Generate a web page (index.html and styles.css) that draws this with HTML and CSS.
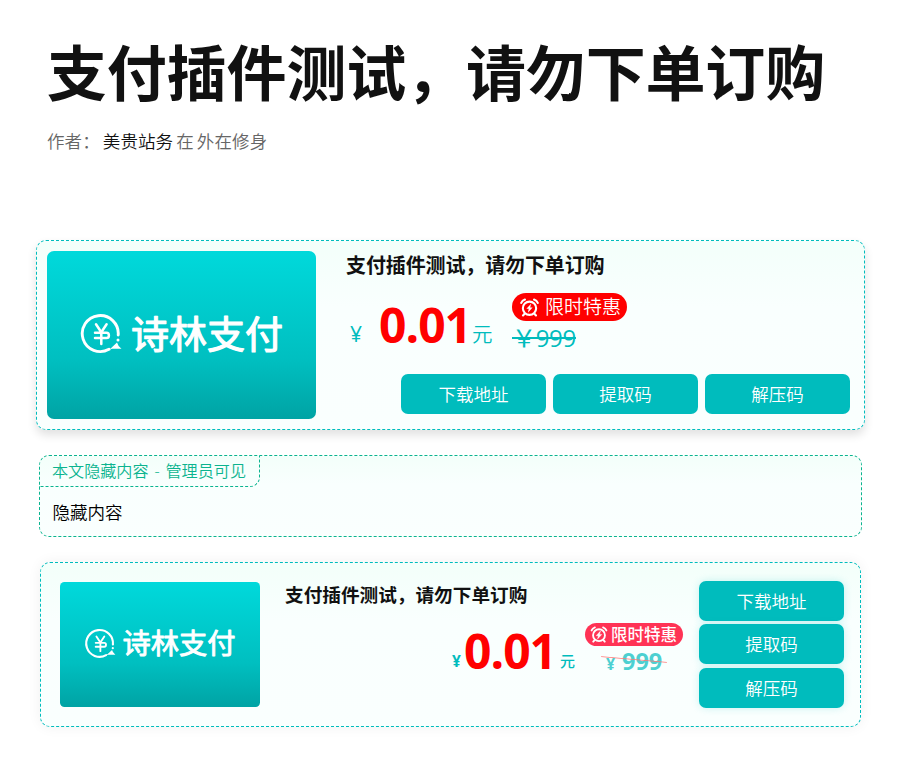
FILE: index.html
```html
<!DOCTYPE html>
<html lang="zh-CN">
<head>
<meta charset="utf-8">
<title>支付插件测试，请勿下单订购</title>
<link rel="stylesheet" href="styles.css">
</head>
<body>
<svg class="defs" aria-hidden="true">
  <defs>
    <linearGradient id="cover-bg" x1="0" y1="0" x2="0" y2="1">
      <stop offset="0" stop-color="#00d9db"/>
      <stop offset=".65" stop-color="#00bfc0"/>
      <stop offset="1" stop-color="#00a3a4"/>
    </linearGradient>
    <symbol id="alarm" viewBox="0 0 20 20">
      <g fill="none" stroke="currentColor" stroke-width="2.2" stroke-linecap="round" stroke-linejoin="round">
        <circle cx="10" cy="10.800" r="7"/>
        <path d="M1.300 5.200Q2.400 2.600 5.200 1.600M18.700 5.200Q17.600 2.600 14.800 1.600M4.600 16.800l-1.400 1.600M15.400 16.800l1.400 1.600"/>
      </g>
      <path d="M11.700 6L6.700 11.400h2.500l-.9 4 5-5.500h-2.600z" fill="currentColor"/>
    </symbol>
    <symbol id="coin" viewBox="0 0 50 50">
      <g fill="none" stroke="#fff" stroke-linecap="round" stroke-linejoin="round">
        <path d="M39.200 25A18 18 0 1 0 30 39.300" stroke-width="2.900"/>
        <path d="M17 14.300l5.300 8 5.300-8M16 22.800h11.500q2.400 0 2.400 2.600t-2.400 2.600H16M16 22.800v0M22.300 22.500v11.500M16 28v0" stroke-width="2.500"/>
      </g>
      <path d="M28.500 40.200q3-1 5.500-4l4-3.700q.6 3 4.500 6.200H33z" fill="#fff"/>
      <circle cx="39" cy="30" r="1.500" fill="#fff"/>
    </symbol>
  </defs>
</svg>
<main class="page">
  <header class="head">
    <h1>支付插件测试，请勿下单订购</h1>
    <p class="meta"><span>作者：</span><b>美贵站务</b><span>在</span><span>外在修身</span></p>
  </header>

  <section class="card card-wide">
    <svg class="cover" viewBox="0 0 269 168">
      <rect width="269" height="168" rx="7" fill="url(#cover-bg)"/>
      <use href="#coin" x="32" y="59" width="50" height="50"/>
      <text class="brand" x="84" y="96.500" textLength="152">诗林支付</text>
    </svg>
    <div class="info">
      <h2>支付插件测试，请勿下单订购</h2>
      <div class="price-row">
        <p class="price"><span class="yen">¥</span><strong>0.01</strong><span class="unit">元</span></p>
        <div class="offer">
          <span class="tag"><svg><use href="#alarm"/></svg>限时特惠</span>
          <s class="old">￥999</s>
        </div>
      </div>
      <div class="actions"><a class="btn">下载地址</a><a class="btn">提取码</a><a class="btn">解压码</a></div>
    </div>
  </section>

  <section class="hidden-box">
    <span class="label">本文隐藏内容 - 管理员可见</span>
    <p>隐藏内容</p>
  </section>

  <section class="card card-compact">
    <svg class="cover" viewBox="0 0 269 168">
      <rect width="269" height="168" rx="6" fill="url(#cover-bg)"/>
      <use href="#coin" x="32" y="59" width="50" height="50"/>
      <text class="brand" x="84" y="96.500" textLength="152">诗林支付</text>
    </svg>
    <div class="info">
      <h2>支付插件测试，请勿下单订购</h2>
      <div class="price-row">
        <p class="price"><span class="yen">¥</span><strong>0.01</strong><span class="unit">元</span></p>
        <div class="offer">
          <span class="tag"><svg><use href="#alarm"/></svg>限时特惠</span>
          <span class="old"><small>¥</small>999</span>
        </div>
      </div>
    </div>
    <div class="actions"><a class="btn">下载地址</a><a class="btn">提取码</a><a class="btn">解压码</a></div>
  </section>
</main>
</body>
</html>
```

FILE: styles.css
```css
* { box-sizing: border-box; }
body {
  margin: 0;
  background: #fff;
  color: #111;
  font: 350 17.5px/26px "Open Sans", "Noto Sans CJK SC", sans-serif;
}
h1, h2, p { margin: 0; }
.defs { display: block; width: 0; height: 0; }
.page { width: 899px; height: 764px; overflow: hidden; padding: 33px 34px 0 36px; }
.head { height: 207px; padding-left: 11px; }
h1 { font-size: 60px; line-height: 80px; font-weight: 700; letter-spacing: -.15px; white-space: nowrap; }
.meta { display: flex; margin-top: 15px; color: #666; letter-spacing: .1px; }
.meta b { font-weight: 350; color: #111; margin: 0 3px; }
.meta span + span { margin-left: 3px; }
.meta b + span { margin-left: 0; }

.card {
  display: flex;
  border: 1px dashed #00bcbd;
  border-radius: 10px;
  background: linear-gradient(#f3fffa, #f9fffe 35%, #fafffe);
}
.cover { display: block; flex: none; }
.brand {
  font: 400 38px "Noto Sans CJK SC", sans-serif;
  fill: #fff;
  stroke: #fff;
  stroke-width: 1.2px;
  stroke-linejoin: round;
}
h2 { font-weight: 700; white-space: nowrap; }
.price-row, .price, .tag { display: flex; }
.price { color: #00bcbd; }
.price strong { color: #f00; font-size: 48px; line-height: 60px; font-weight: 700; letter-spacing: -1px; }
.tag { align-items: center; color: #fff; white-space: nowrap; }
.btn {
  display: block;
  width: 145px;
  height: 40px;
  border-radius: 7px;
  background: #00bcbd;
  color: #fff;
  line-height: 40px;
  text-align: center;
}

.card-wide { width: 829px; height: 190px; padding: 10px; box-shadow: 0 5px 10px rgba(0, 0, 0, .12); }
.card-wide .cover { width: 269px; height: 168px; }
.card-wide .info { margin-left: 30px; flex: 1; }
.card-wide h2 { font-size: 20px; line-height: 30px; letter-spacing: -.12px; }
.card-wide .price-row { height: 81px; margin-top: 12px; }
.card-wide .price { width: 166px; padding-left: 4px; }
.card-wide .yen { width: 29px; font-size: 21px; line-height: 82px; font-weight: 400; }
.card-wide .price strong { line-height: 63px; }
.card-wide .unit { font-size: 20.5px; line-height: 82px; margin-left: 1px; }
.card-wide .tag { width: 115px; height: 28px; border-radius: 14px; background: #f00; font-size: 19px; padding-left: 8px; }
.card-wide .tag svg { width: 19px; height: 19px; margin-right: 6px; }
.card-wide .old { display: block; width: max-content; margin-top: 2px; color: #00bcbd; font-size: 24px; font-weight: 400; line-height: 30px; letter-spacing: -.3px; text-decoration-thickness: 2px; }
.card-wide .actions { display: flex; gap: 7px; margin-left: 55px; }

.hidden-box {
  width: 823px;
  height: 82px;
  margin: 25px 0 0 3px;
  border: 1px dashed #0bb48f;
  border-radius: 10px;
  background: linear-gradient(#f3fffa, #f9fffe 35%, #fafffe);
}
.label {
  display: block;
  width: 221px;
  height: 31px;
  margin-left: -1px;
  padding-left: 13px;
  border: 1px dashed #0bb48f;
  border-width: 0 1px 1px 0;
  border-bottom-right-radius: 10px;
  color: #0bb48f;
  font-size: 16.1px;
  line-height: 31px;
  word-spacing: 1.7px;
  white-space: nowrap;
}
.hidden-box p { margin: 12px 0 0 12.5px; color: #000; }

.card-compact { width: 821px; height: 165px; margin: 25px 0 0 4px; padding: 18px 16px 0 19px; box-shadow: 0 0 14px rgba(0, 0, 0, .06); }
.card-compact .cover { width: 200px; height: 125px; margin-top: 1px; }
.card-compact .info { width: 414px; margin: 0 0 0 25px; flex: none; }
.card-compact h2 { font-size: 18.65px; line-height: 28px; }
.card-compact .price-row { height: 60px; margin-top: 14px; padding-left: 167px; }
.card-compact .price { width: 133px; }
.card-compact .yen { width: 12px; font-size: 15.5px; line-height: 77px; font-weight: 700; }
.card-compact .price strong { line-height: 55px; }
.card-compact .unit { font-size: 15px; line-height: 76px; font-weight: 500; margin-left: 4px; }
.card-compact .tag { width: 98px; height: 23px; border-radius: 12px; background: #f35; font-size: 16.5px; font-weight: 500; padding-left: 5px; }
.card-compact .tag svg { width: 18px; height: 17px; margin-right: 3px; stroke: #fff; stroke-width: .5px; }
.card-compact .old {
  display: block;
  position: relative;
  width: 66px;
  margin: 1px 0 0 16px;
  padding-left: 5px;
  color: #4dd0d1;
  font-size: 23.5px;
  font-weight: 700;
  line-height: 28px;
}
.card-compact .old::after {
  content: "";
  position: absolute;
  left: 0;
  right: 0;
  top: 12px;
  height: 1px;
  background: #f77;
  transform: rotate(5deg);
}
.card-compact .old small { display: inline-block; width: 16px; font-size: 16px; }
.card-compact .actions { display: flex; flex-direction: column; gap: 3px; }
.card-compact .btn { box-shadow: 0 0 8px rgba(0, 188, 189, .2); }
.card-compact .btn:last-child { margin-top: 1px; }
```
